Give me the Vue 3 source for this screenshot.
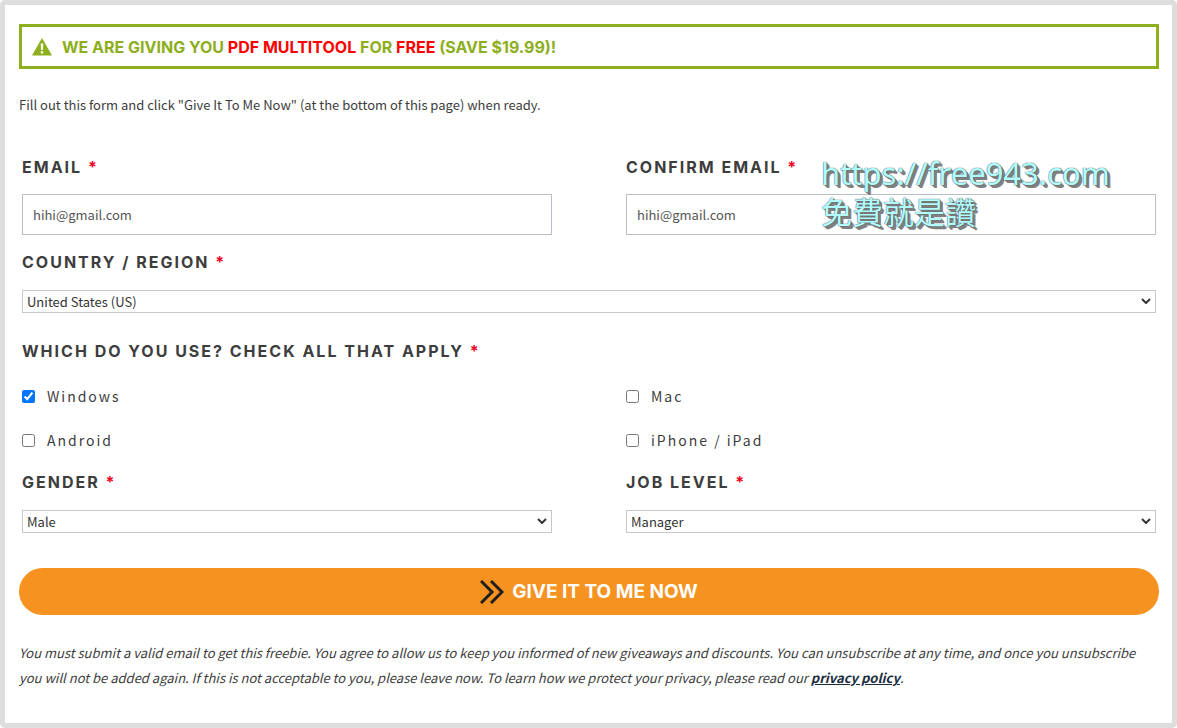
<script setup>
import { reactive } from 'vue'

const form = reactive({
  email: 'hihi@gmail.com',
  confirm: 'hihi@gmail.com',
  country: 'United States (US)',
  platforms: ['Windows'],
  gender: 'Male',
  job: 'Manager',
})

const platforms = ['Windows', 'Mac', 'Android', 'iPhone / iPad']
</script>

<template>
  <main class="page">
    <div class="banner">
      <svg class="warning" viewBox="0 0 20 18" aria-hidden="true">
        <path fill="#8dae1d" d="M10 0 20 17.5H0Z" />
        <path fill="#fff" d="M8.7 5.5h2.6L10.9 12H9.1ZM8.8 13.2h2.4v2.2H8.8Z" />
      </svg>
      <span>WE ARE GIVING YOU <em>PDF MULTITOOL</em> FOR <em>FREE</em> (SAVE $19.99)!</span>
    </div>

    <p class="intro">Fill out this form and click "Give It To Me Now" (at the bottom of this page) when ready.</p>

    <form @submit.prevent>
      <div class="fields">
        <div class="field text-field">
          <label class="title" for="email">EMAIL <span class="req">*</span></label>
          <input id="email" v-model="form.email" type="email" />
        </div>
        <div class="field text-field">
          <label class="title" for="confirm">CONFIRM EMAIL <span class="req">*</span></label>
          <input id="confirm" v-model="form.confirm" type="email" />
          <div class="watermark">https://free943.com<br />免費就是讚</div>
        </div>

        <div class="field wide">
          <label class="title" for="country">COUNTRY / REGION <span class="req">*</span></label>
          <div class="select">
            <select id="country" v-model="form.country"><option>United States (US)</option></select>
            <svg viewBox="0 0 10 6" aria-hidden="true"><path d="M1 1l4 4 4-4" /></svg>
          </div>
        </div>

        <fieldset class="wide">
          <legend class="title">WHICH DO YOU USE? CHECK ALL THAT APPLY <span class="req">*</span></legend>
          <div class="checks">
            <label v-for="p in platforms" :key="p" class="check">
              <input v-model="form.platforms" type="checkbox" :value="p" />{{ p }}
            </label>
          </div>
        </fieldset>

        <div class="field">
          <label class="title" for="gender">GENDER <span class="req">*</span></label>
          <div class="select">
            <select id="gender" v-model="form.gender"><option>Male</option></select>
            <svg viewBox="0 0 10 6" aria-hidden="true"><path d="M1 1l4 4 4-4" /></svg>
          </div>
        </div>
        <div class="field">
          <label class="title" for="job">JOB LEVEL <span class="req">*</span></label>
          <div class="select">
            <select id="job" v-model="form.job"><option>Manager</option></select>
            <svg viewBox="0 0 10 6" aria-hidden="true"><path d="M1 1l4 4 4-4" /></svg>
          </div>
        </div>
      </div>

      <button type="submit">
        <svg viewBox="0 0 24 24" aria-hidden="true">
          <path d="M1 1l11 11L1 23M11 1l11 11-11 11" />
        </svg>
        GIVE IT TO ME NOW
      </button>
    </form>

    <p class="terms">
      You must submit a valid email to get this freebie. You agree to allow us to keep you informed of new giveaways and discounts. You can unsubscribe at any time, and once you unsubscribe you will not be added again. If this is not acceptable to you, please leave now. To learn how we protect your privacy, please read our <a href="#">privacy policy</a>.
    </p>
  </main>
</template>

<style>
body {
  background: #fff;
}
</style>

<style scoped>
.page {
  box-sizing: border-box;
  min-height: 100vh;
  padding: 19px 13px 32px 14px;
  border: 5px solid #ddd;
  border-radius: 5px;
  color: #3d3d3d;
  font: 13px/24px "Noto Sans CJK TC", sans-serif;
}
.banner {
  display: flex;
  align-items: center;
  gap: 10px;
  box-sizing: border-box;
  height: 45px;
  padding: 0 10px;
  border: 3px solid #8dae1d;
  color: #8dae1d;
  font: 700 16px/24px Inter, sans-serif;
}
.banner em {
  color: #f00;
  font-style: normal;
}
.warning {
  width: 20px;
  height: 18px;
}
.intro {
  margin: 24px 0 38px;
}
.fields {
  display: grid;
  grid-template-columns: 1fr 1fr;
  column-gap: 74px;
  padding: 0 3px;
}
.field {
  position: relative;
  display: flex;
  flex-direction: column;
  gap: 16px;
}
.text-field {
  gap: 15px;
  margin-bottom: 15px;
}
.wide {
  grid-column: 1 / -1;
}
.title {
  padding: 0;
  font: 700 16px/24px Inter, sans-serif;
  letter-spacing: 2px;
}
.req {
  color: #f00020;
}
.text-field input {
  box-sizing: border-box;
  width: 100%;
  height: 41px;
  padding: 0 10px;
  border: 1px solid #b9bec5;
  color: #555;
  font: inherit;
}
.select {
  position: relative;
}
.select select {
  display: block;
  box-sizing: border-box;
  width: 100%;
  height: 23px;
  padding: 0 20px 0 4px;
  border: 1px solid #c8c8c8;
  border-radius: 0;
  appearance: none;
  background: #fff;
  color: #333;
  font: 13px/20px "Noto Sans CJK TC", sans-serif;
}
.select svg {
  position: absolute;
  top: 8px;
  right: 5px;
  width: 10px;
  height: 6px;
  fill: none;
  stroke: #333;
  stroke-width: 2;
  pointer-events: none;
}
fieldset {
  min-width: 0;
  margin: 26px 0 18px;
  padding: 0;
  border: 0;
}
.checks {
  display: grid;
  grid-template-columns: 1fr 1fr;
  gap: 20px 74px;
  padding-top: 21px;
}
.check {
  display: flex;
  align-items: center;
  gap: 12px;
  font-size: 14px;
  letter-spacing: 2px;
}
.check input {
  width: 13px;
  height: 13px;
  margin: 0;
}
button {
  display: flex;
  align-items: center;
  justify-content: center;
  gap: 8px;
  width: 100%;
  height: 47px;
  margin-top: 35px;
  padding: 0 10px;
  border: 0;
  border-radius: 24px;
  background: #f69220;
  color: #fff;
  font: 700 19px/24px Inter, sans-serif;
}
button svg {
  width: 24px;
  height: 24px;
  fill: none;
  stroke: #231f20;
  stroke-width: 3;
}
.terms {
  margin: 25px 0 0;
  line-height: 25px;
  font-style: italic;
}
.terms a {
  color: #1a2c3f;
  font-weight: 700;
}
.watermark {
  position: absolute;
  top: -1px;
  left: 195px;
  color: #b0ffff;
  font: 31px/39px "Noto Sans", "Noto Sans CJK TC", sans-serif;
  white-space: nowrap;
  text-shadow: 0 0 1px #555, 0 0 1px #555, 1px 1px 0 #808080, 2px 2px 0 #808080, 3px 3px 0 #808080;
  pointer-events: none;
}
</style>
